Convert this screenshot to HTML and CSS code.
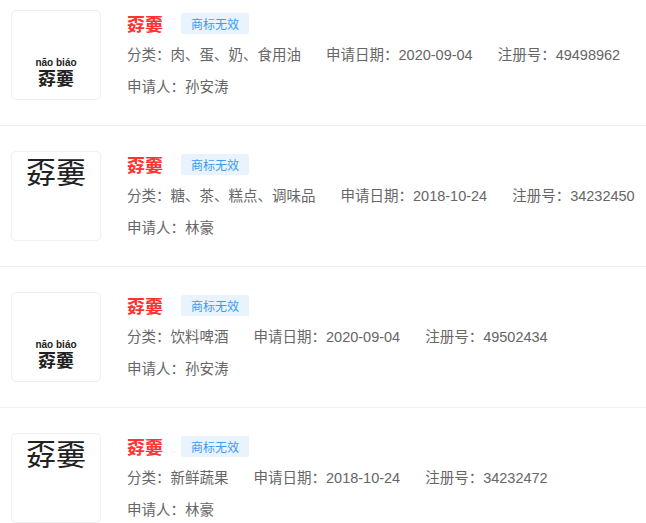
FILE: index.html
```html
<!DOCTYPE html>
<html lang="zh">
<head>
<meta charset="utf-8">
<link rel="stylesheet" href="styles.css">
</head>
<body>
<div class="list">
  <div class="item">
    <div class="logo logo-pinyin">
      <div class="py">nāo biáo</div>
      <div class="pc">孬嫑</div>
    </div>
    <div class="info">
      <div class="head"><span class="name">孬嫑</span><span class="badge">商标无效</span></div>
      <div class="row"><span class="f">分类：肉、蛋、奶、食用油</span><span class="f">申请日期：2020-09-04</span><span class="f">注册号：49498962</span></div>
      <div class="row"><span class="f">申请人：孙安涛</span></div>
    </div>
  </div>
  <div class="item">
    <div class="logo logo-text"><div class="lt">孬嫑</div></div>
    <div class="info">
      <div class="head"><span class="name">孬嫑</span><span class="badge">商标无效</span></div>
      <div class="row"><span class="f">分类：糖、茶、糕点、调味品</span><span class="f">申请日期：2018-10-24</span><span class="f">注册号：34232450</span></div>
      <div class="row"><span class="f">申请人：林豪</span></div>
    </div>
  </div>
  <div class="item">
    <div class="logo logo-pinyin">
      <div class="py">nāo biáo</div>
      <div class="pc">孬嫑</div>
    </div>
    <div class="info">
      <div class="head"><span class="name">孬嫑</span><span class="badge">商标无效</span></div>
      <div class="row"><span class="f">分类：饮料啤酒</span><span class="f">申请日期：2020-09-04</span><span class="f">注册号：49502434</span></div>
      <div class="row"><span class="f">申请人：孙安涛</span></div>
    </div>
  </div>
  <div class="item">
    <div class="logo logo-text"><div class="lt">孬嫑</div></div>
    <div class="info">
      <div class="head"><span class="name">孬嫑</span><span class="badge">商标无效</span></div>
      <div class="row"><span class="f">分类：新鲜蔬果</span><span class="f">申请日期：2018-10-24</span><span class="f">注册号：34232472</span></div>
      <div class="row"><span class="f">申请人：林豪</span></div>
    </div>
  </div>
</div>
</body>
</html>
```
FILE: styles.css
```css
html, body {
  margin: 0;
  padding: 0;
  background: #fff;
  overflow: hidden;
}
body {
  font-family: "Liberation Sans", "Noto Sans CJK SC", sans-serif;
  color: #666;
}
.list {
  margin-top: -15px;
}
.item {
  display: flex;
  align-items: flex-start;
  padding: 25px 0 22px 11px;
  border-bottom: 1px solid #f0f0f0;
  white-space: nowrap;
}
.logo {
  width: 88px;
  height: 88px;
  border: 1px solid #efefef;
  border-radius: 5px;
  flex: none;
  display: flex;
  flex-direction: column;
  align-items: center;
  color: #222;
}
.py {
  margin-top: 46px;
  font-family: "Liberation Sans", sans-serif;
  font-weight: bold;
  font-size: 10px;
  line-height: 11px;
  color: #222;
}
.pc {
  font-family: "Noto Sans CJK SC", sans-serif;
  font-weight: bold;
  font-size: 18px;
  line-height: 18px;
  color: #222;
}
.lt {
  margin-top: 0;
  font-family: "Noto Sans CJK SC", sans-serif;
  font-size: 30px;
  line-height: 36px;
  color: #222;
}
.info {
  margin-left: 26px;
  display: flex;
  flex-direction: column;
}
.head {
  display: flex;
  align-items: center;
  height: 26px;
  margin-bottom: 3px;
}
.name {
  font-family: "Noto Sans CJK SC", sans-serif;
  font-weight: bold;
  font-size: 18px;
  color: #ff3333;
  line-height: 26px;
}
.badge {
  margin-left: 18px;
  background: #e8f3fe;
  color: #3d9bf0;
  font-size: 12px;
  line-height: 21px;
  height: 21px;
  padding: 0 10px;
  border-radius: 2px;
  font-family: "Noto Sans CJK SC", sans-serif;
}
.row {
  display: flex;
  gap: 25px;
  font-size: 14.5px;
  line-height: 32px;
  color: #666;
}
```
